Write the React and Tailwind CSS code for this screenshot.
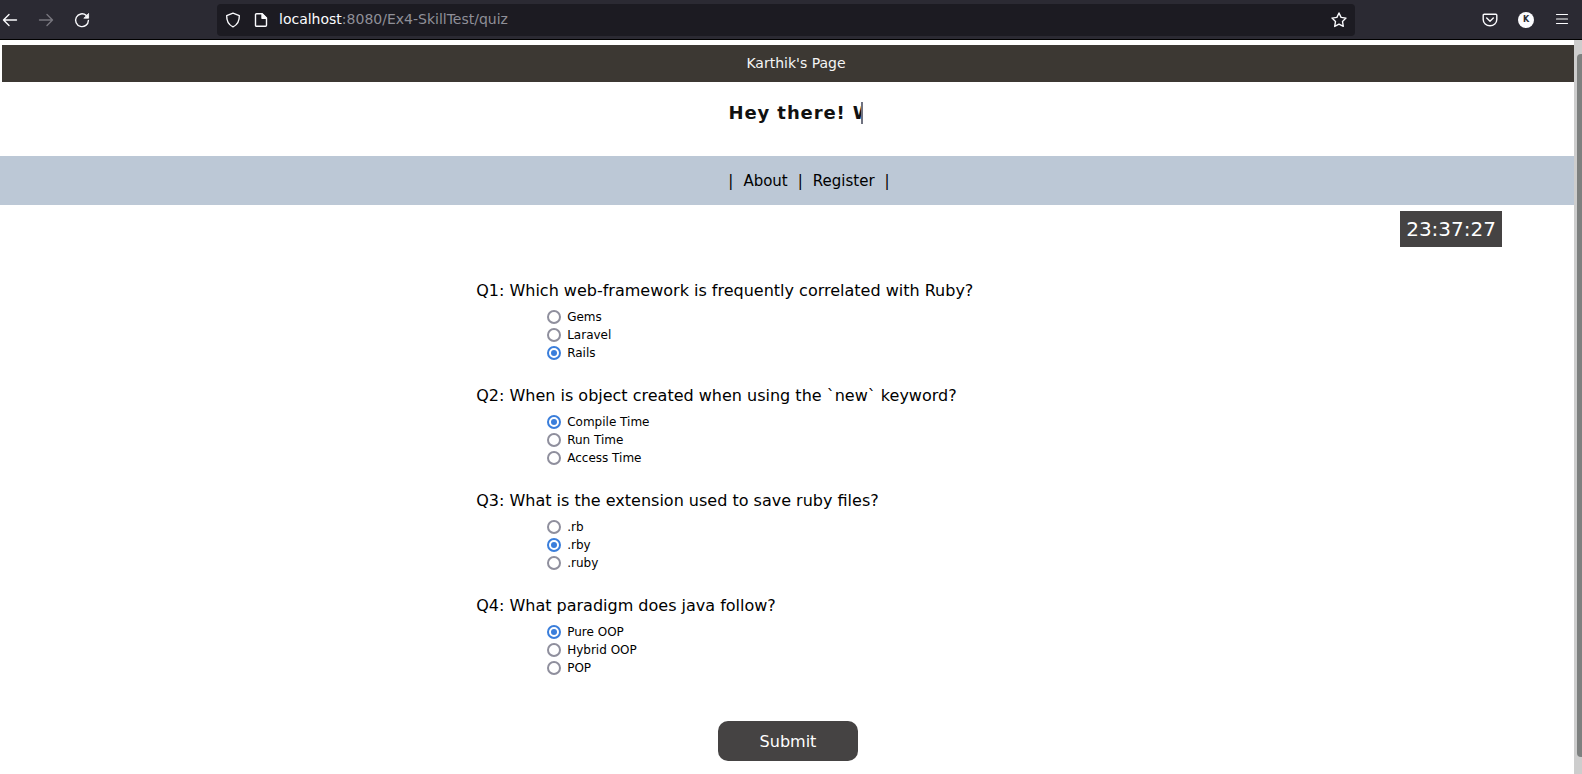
import React from "react";

const questions = [
  {
    id: "q1",
    text: "Q1: Which web-framework is frequently correlated with Ruby?",
    options: ["Gems", "Laravel", "Rails"],
    selected: "Rails",
  },
  {
    id: "q2",
    text: "Q2: When is object created when using the `new` keyword?",
    options: ["Compile Time", "Run Time", "Access Time"],
    selected: "Compile Time",
  },
  {
    id: "q3",
    text: "Q3: What is the extension used to save ruby files?",
    options: [".rb", ".rby", ".ruby"],
    selected: ".rby",
  },
  {
    id: "q4",
    text: "Q4: What paradigm does java follow?",
    options: ["Pure OOP", "Hybrid OOP", "POP"],
    selected: "Pure OOP",
  },
];

function Icon({ children }) {
  return (
    <svg
      className="block size-4"
      viewBox="0 0 16 16"
      fill="none"
      stroke="currentColor"
      strokeWidth="1.4"
      strokeLinecap="round"
      strokeLinejoin="round"
      aria-hidden="true"
    >
      {children}
    </svg>
  );
}

function BrowserBar() {
  return (
    <header className="flex h-10 items-center border-b border-black bg-[#2b2a33] pr-3 text-[#fbfbfe]">
      <div className="flex w-[217px] shrink-0 items-center gap-5 pl-0.5">
        <button type="button" aria-label="Back">
          <Icon>
            <path d="M14.5 8H1.5M7 2.5L1.5 8L7 13.5" />
          </Icon>
        </button>
        <button type="button" aria-label="Forward" className="text-[#77767e]">
          <Icon>
            <path d="M1.5 8H14.5M9 2.5L14.5 8L9 13.5" />
          </Icon>
        </button>
        <button type="button" aria-label="Reload">
          <Icon>
            <path d="M12.2 3.4A6.4 6.4 0 1 0 14.4 8.4" />
            <path d="M14.6 1.8V6.2H10.2Z" fill="currentColor" strokeWidth="0.8" />
          </Icon>
        </button>
      </div>
      <div className="flex h-8 flex-1 items-center gap-3 rounded bg-[#1c1b22] px-2">
        <Icon>
          <path d="M8 1.2L14.3 3.6C14.5 8.8 12.4 12.8 8 14.8C3.6 12.8 1.5 8.8 1.7 3.6Z" />
        </Icon>
        <div className="flex flex-1 items-center gap-2.5">
          <Icon>
            <path d="M3.5 1.7H9.2L13.5 6V13.3A1 1 0 0 1 12.5 14.3H3.5A1 1 0 0 1 2.5 13.3V2.7A1 1 0 0 1 3.5 1.7Z" />
            <path d="M9 1.9V6.2H13.3Z" fill="currentColor" />
          </Icon>
          <div className="pb-0.5 text-sm">
            localhost<span className="text-[#8f8f98]">:8080/Ex4-SkillTest/quiz</span>
          </div>
        </div>
        <button type="button" aria-label="Bookmark this page">
          <Icon>
            <path d="M8 1L10.1 5.4L15 6.1L11.5 9.5L12.3 14.4L8 12.1L3.7 14.4L4.5 9.5L1 6.1L5.9 5.4Z" />
          </Icon>
        </button>
      </div>
      <div className="flex w-[215px] shrink-0 items-center justify-end gap-5">
        <button type="button" aria-label="Save to Pocket">
          <Icon>
            <path d="M2.2 2.2H13.8A1 1 0 0 1 14.8 3.2V7.4A6.8 6.4 0 0 1 1.2 7.4V3.2A1 1 0 0 1 2.2 2.2Z" />
            <path d="M4.7 6L8 9.2L11.3 6" />
          </Icon>
        </button>
        <button
          type="button"
          aria-label="Account"
          className="size-4 rounded-full bg-[#fbfbfe] text-[8px] leading-4 font-bold text-[#2b2a33]"
        >
          K
        </button>
        <button type="button" aria-label="Open menu">
          <Icon>
            <path d="M2.5 2.5H13.5M2.5 7H13.5M2.5 11.5H13.5" strokeWidth="1.2" />
          </Icon>
        </button>
      </div>
    </header>
  );
}

function Question({ question }) {
  return (
    <fieldset className="h-[105px]">
      <legend className="h-[27px] text-base leading-5">{question.text}</legend>
      <div className="pl-[71px]">
        {question.options.map((option) => (
          <label key={option} className="flex h-[18px] w-fit items-center gap-1.5 text-xs">
            <input
              type="radio"
              name={question.id}
              value={option}
              defaultChecked={option === question.selected}
              className="size-3.5 appearance-none rounded-full border-2 border-[#8f8f9d] bg-white checked:border-[#3a7edb] checked:bg-[#3a7edb] checked:bg-clip-content checked:p-0.5"
            />
            {option}
          </label>
        ))}
      </div>
    </fieldset>
  );
}

export default function App() {
  return (
    <div className="flex min-h-screen flex-col bg-white font-['DejaVu_Sans',sans-serif] text-black">
      <BrowserBar />
      <div className="flex flex-1">
        <main className="min-w-0 flex-1 pt-[5px]">
          <div className="ml-0.5 bg-[#3c3833] pl-4 text-center text-sm leading-[37px] text-[#f5f5f5]">
            Karthik's Page
          </div>
          <div className="flex h-[74px] justify-center pt-5 pl-[17px]">
            <h1 className="h-[22px] w-[134px] overflow-hidden border-r-2 border-[#6f7280] text-lg leading-[22px] font-bold tracking-wider whitespace-nowrap text-[#111]">
              Hey there! W
            </h1>
          </div>
          <nav className="flex h-[49px] items-center justify-center gap-2.5 bg-[#bcc8d6] pt-0.5 pl-11 text-[15px]">
            <span>|</span>
            <a href="#about">About</a>
            <span>|</span>
            <a href="#register">Register</a>
            <span>|</span>
          </nav>
          <div className="flex justify-end pt-1.5 pr-[72px]">
            <time className="bg-[#454343] px-1.5 text-xl leading-9 text-white">23:37:27</time>
          </div>
          <form className="pt-[34px]" onSubmit={(event) => event.preventDefault()}>
            <div className="ml-[30%] pl-1">
              {questions.map((question) => (
                <Question key={question.id} question={question} />
              ))}
            </div>
            <div className="flex justify-center pt-5 pl-0.5">
              <button
                type="submit"
                className="h-10 w-[140px] rounded-[10px] bg-[#454343] pt-0.5 text-base text-white"
              >
                Submit
              </button>
            </div>
          </form>
        </main>
        <div className="w-2 shrink-0 bg-[#cdcdcd] pt-3.5 pb-[17px] pl-[3px]" aria-hidden="true">
          <div className="h-full rounded-l-sm bg-[#7d807f]" />
        </div>
      </div>
    </div>
  );
}
